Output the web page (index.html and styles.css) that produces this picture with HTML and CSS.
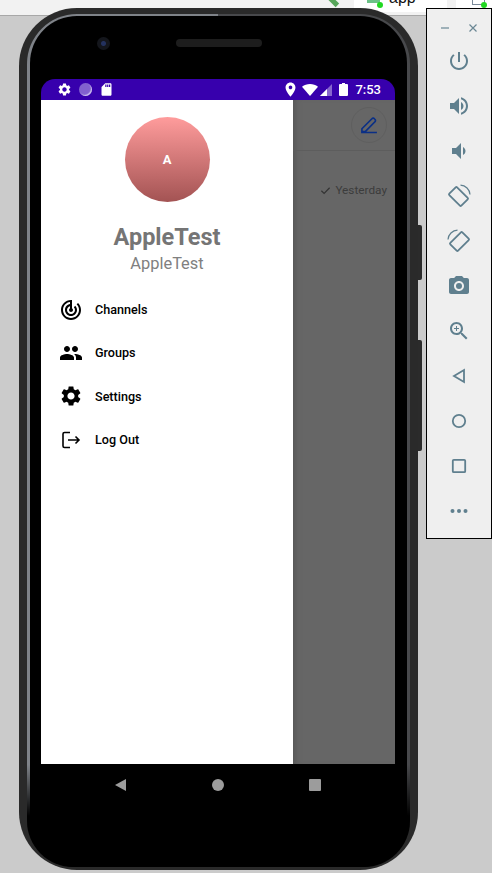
FILE: index.html
```html
<!DOCTYPE html>
<html lang="en">
<head>
    <meta charset="UTF-8">
    <title>Emulator</title>
    <link rel="stylesheet" href="styles.css">
</head>
<body>
    <div class="toolbar">
        <div class="hammer"></div>
        <div class="runTab">
            <span class="moduleIcon"><span class="greenDot"></span></span>
            <span class="runName">app</span>
        </div>
        <div class="deviceTab">
            <span class="deviceIcon"><span class="greenDot"></span></span>
        </div>
    </div>

    <div class="sideBtn powerBtn"></div>
    <div class="sideBtn volumeBtn"></div>

    <div class="phone">
        <div class="rim">
            <div class="face">
                <div class="earpiece">
                    <span class="camera"></span>
                    <span class="speaker"></span>
                </div>
                <div class="screen">
                    <div class="statusBar">
                        <div class="statusGroup">
                            <svg class="statusIcon" viewBox="0 0 24 24"><path d="M19.14 12.94c.04-.3.06-.61.06-.94 0-.32-.02-.64-.07-.94l2.03-1.58c.18-.14.23-.41.12-.61l-1.92-3.32c-.12-.22-.37-.29-.59-.22l-2.39.96c-.5-.38-1.03-.7-1.62-.94l-.36-2.54c-.04-.24-.24-.41-.48-.41h-3.84c-.24 0-.43.17-.47.41l-.36 2.54c-.59.24-1.13.57-1.62.94l-2.39-.96c-.22-.08-.47 0-.59.22L2.74 8.87c-.12.21-.08.47.12.61l2.03 1.58c-.05.3-.09.63-.09.94s.02.64.07.94l-2.03 1.58c-.18.14-.23.41-.12.61l1.92 3.32c.12.22.37.29.59.22l2.39-.96c.5.38 1.03.7 1.62.94l.36 2.54c.05.24.24.41.48.41h3.84c.24 0 .44-.17.47-.41l.36-2.54c.59-.24 1.13-.56 1.62-.94l2.39.96c.22.08.47 0 .59-.22l1.92-3.32c.12-.22.07-.47-.12-.61l-2.01-1.58zM12 15.6c-1.98 0-3.6-1.62-3.6-3.6s1.62-3.6 3.6-3.6 3.6 1.62 3.6 3.6-1.62 3.6-3.6 3.6z"/></svg>
                            <span class="syncDot"></span>
                            <svg class="statusIcon" viewBox="0 0 24 24"><path d="M18 2h-8L4.02 8 4 20c0 1.1.9 2 2 2h12c1.1 0 2-.9 2-2V4c0-1.1-.9-2-2-2zm-6 6h-2V4h2v4zm3 0h-2V4h2v4zm3 0h-2V4h2v4z"/></svg>
                        </div>
                        <div class="statusGroup">
                            <svg class="locationIcon" viewBox="0 0 24 24"><path d="M12 2C8.13 2 5 5.13 5 9c0 5.25 7 13 7 13s7-7.75 7-13c0-3.87-3.13-7-7-7zm0 9.5c-1.38 0-2.5-1.12-2.5-2.5s1.12-2.5 2.5-2.5 2.5 1.12 2.5 2.5-1.12 2.5-2.5 2.5z"/></svg>
                            <svg class="wifiIcon" viewBox="0 0 24 18"><path d="M12 18 24 4C20.6 1.4 16.5 0 12 0S3.4 1.4 0 4z"/></svg>
                            <svg class="signalIcon" viewBox="0 0 12 12"><path d="M12 0V12H0z" fill-opacity=".4"/><path d="M7 5V12H0z"/></svg>
                            <svg class="batteryIcon" viewBox="0 0 9 13"><path d="M3 0H6V1H8A1 1 0 0 1 9 2V12A1 1 0 0 1 8 13H1A1 1 0 0 1 0 12V2A1 1 0 0 1 1 1H3z"/></svg>
                            <span class="clock">7:53</span>
                        </div>
                    </div>
                    <div class="appArea">
                        <div class="drawer">
                            <div class="avatar">A</div>
                            <div class="userName">AppleTest</div>
                            <div class="userSub">AppleTest</div>
                            <div class="menu">
                                <div class="menuItem">
                                    <svg class="menuIcon" viewBox="0 0 24 24"><path d="M19.07 4.93l-1.41 1.41C19.1 7.79 20 9.79 20 12c0 4.42-3.58 8-8 8s-8-3.58-8-8c0-4.08 3.05-7.44 7-7.93v2.02C8.16 6.57 6 9.03 6 12c0 3.31 2.69 6 6 6s6-2.69 6-6c0-1.66-.67-3.16-1.76-4.24l-1.41 1.41C15.55 9.9 16 10.9 16 12c0 2.21-1.79 4-4 4s-4-1.79-4-4c0-1.86 1.28-3.41 3-3.86v2.14c-.6.35-1 .98-1 1.72 0 1.1.9 2 2 2s2-.9 2-2c0-.74-.4-1.38-1-1.72V2h-1C6.48 2 2 6.48 2 12s4.48 10 10 10 10-4.48 10-10c0-2.76-1.12-5.26-2.93-7.07z"/></svg>
                                    <span>Channels</span>
                                </div>
                                <div class="menuItem">
                                    <svg class="menuIcon" viewBox="0 0 24 24"><path d="M16 11c1.66 0 2.99-1.34 2.99-3S17.66 5 16 5c-1.66 0-3 1.34-3 3s1.34 3 3 3zm-8 0c1.66 0 2.99-1.34 2.99-3S9.66 5 8 5C6.34 5 5 6.34 5 8s1.34 3 3 3zm0 2c-2.33 0-7 1.17-7 3.5V19h14v-2.5c0-2.33-4.67-3.5-7-3.5zm8 0c-.29 0-.62.02-.97.05 1.16.84 1.97 1.97 1.97 3.45V19h6v-2.5c0-2.33-4.67-3.5-7-3.5z"/></svg>
                                    <span>Groups</span>
                                </div>
                                <div class="menuItem">
                                    <svg class="menuIcon" viewBox="0 0 24 24"><path d="M19.14 12.94c.04-.3.06-.61.06-.94 0-.32-.02-.64-.07-.94l2.03-1.58c.18-.14.23-.41.12-.61l-1.92-3.32c-.12-.22-.37-.29-.59-.22l-2.39.96c-.5-.38-1.03-.7-1.62-.94l-.36-2.54c-.04-.24-.24-.41-.48-.41h-3.84c-.24 0-.43.17-.47.41l-.36 2.54c-.59.24-1.13.57-1.62.94l-2.39-.96c-.22-.08-.47 0-.59.22L2.74 8.87c-.12.21-.08.47.12.61l2.03 1.58c-.05.3-.09.63-.09.94s.02.64.07.94l-2.03 1.58c-.18.14-.23.41-.12.61l1.92 3.32c.12.22.37.29.59.22l2.39-.96c.5.38 1.03.7 1.62.94l.36 2.54c.05.24.24.41.48.41h3.84c.24 0 .44-.17.47-.41l.36-2.54c.59-.24 1.13-.56 1.62-.94l2.39.96c.22.08.47 0 .59-.22l1.92-3.32c.12-.22.07-.47-.12-.61l-2.01-1.58zM12 15.6c-1.98 0-3.6-1.62-3.6-3.6s1.62-3.6 3.6-3.6 3.6 1.62 3.6 3.6-1.62 3.6-3.6 3.6z"/></svg>
                                    <span>Settings</span>
                                </div>
                                <div class="menuItem">
                                    <svg class="menuIcon" viewBox="0 0 24 24" fill="none" stroke="#000" stroke-width="1.6"><path d="M11 4.500H5.500A1.500 1.500 0 0 0 4 6V18A1.500 1.500 0 0 0 5.500 19.500H11"/><path d="M9 12H20M16.500 8.500 20 12 16.500 15.500"/></svg>
                                    <span>Log Out</span>
                                </div>
                            </div>
                        </div>
                        <div class="behind">
                            <div class="appBar">
                                <span class="composeBtn">
                                    <svg class="composeIcon" viewBox="0 0 24 24" fill="none" stroke="#0a2f86" stroke-width="2"><path d="M3.500 16.500 15.500 4.500a2 2 0 0 1 3 0l.6.6a2 2 0 0 1 0 3L7.500 20H3.500zM2.500 21h19"/></svg>
                                </span>
                            </div>
                            <div class="chatTime">
                                <svg class="checkIcon" viewBox="0 0 24 24" fill="none" stroke="#333" stroke-width="2.600"><path d="M3 12.500 9 18.500 21 6"/></svg>
                                <span>Yesterday</span>
                            </div>
                        </div>
                    </div>
                </div>
                <div class="navBar">
                    <span class="navBack"></span>
                    <span class="navHome"></span>
                    <span class="navRecent"></span>
                </div>
            </div>
        </div>
    </div>

    <div class="controls">
        <div class="controlsHead">
            <svg class="headIcon" viewBox="0 0 10 10"><path d="M1 5H9"/></svg>
            <svg class="headIcon" viewBox="0 0 10 10"><path d="M1.500 1.500 8.500 8.500M8.500 1.500 1.500 8.500"/></svg>
        </div>
        <div class="controlBtn"><svg viewBox="0 0 24 24"><path d="M13 3h-2v10h2V3zm4.830 2.170l-1.420 1.420C17.990 7.860 19 9.810 19 12c0 3.870-3.130 7-7 7s-7-3.130-7-7c0-2.190 1.010-4.140 2.580-5.420L6.170 5.170C4.230 6.820 3 9.260 3 12c0 4.970 4.030 9 9 9s9-4.030 9-9c0-2.740-1.230-5.180-3.170-6.830z"/></svg></div>
        <div class="controlBtn"><svg viewBox="0 0 24 24"><path d="M3 9v6h4l5 5V4L7 9H3zm13.500 3c0-1.770-1.020-3.290-2.500-4.030v8.050c1.480-.73 2.500-2.250 2.500-4.020zM14 3.230v2.060c2.890.86 5 3.540 5 6.710s-2.110 5.850-5 6.710v2.060c4.010-.91 7-4.490 7-8.770s-2.990-7.860-7-8.770z"/></svg></div>
        <div class="controlBtn"><svg viewBox="0 0 24 24"><path d="M18.500 12c0-1.770-1.020-3.290-2.500-4.030v8.050c1.480-.73 2.500-2.250 2.500-4.020zM5 9v6h4l5 5V4L9 9H5z"/></svg></div>
        <div class="controlBtn"><svg class="lined" viewBox="0 0 24 24"><rect x="6" y="4" width="11" height="17" rx="1" transform="rotate(-45 11.500 12.500)"/><path class="thin" d="M13.500 1.200C18.500 1.200 22.800 5.500 23 10.500"/></svg></div>
        <div class="controlBtn"><svg class="lined" viewBox="0 0 24 24"><rect x="7" y="4" width="11" height="17" rx="1" transform="rotate(45 12.500 12.500)"/><path class="thin" d="M10.500 1.200C5.500 1.200 1.200 5.500 1 10.500"/></svg></div>
        <div class="controlBtn"><svg viewBox="0 0 24 24"><path fill-rule="evenodd" d="M9 2 7.170 4H4C2.900 4 2 4.900 2 6v12c0 1.100.9 2 2 2h16c1.100 0 2-.9 2-2V6c0-1.100-.9-2-2-2h-3.170L15 2H9zm3 15c-2.760 0-5-2.240-5-5s2.240-5 5-5 5 2.240 5 5-2.240 5-5 5z"/><circle cx="12" cy="12" r="3"/></svg></div>
        <div class="controlBtn"><svg viewBox="0 0 24 24"><path d="M15.500 14h-.79l-.28-.27C15.410 12.590 16 11.110 16 9.500 16 5.910 13.090 3 9.500 3S3 5.910 3 9.500 5.910 16 9.500 16c1.610 0 3.090-.59 4.230-1.570l.27.28v.79l5 4.990L20.490 19l-4.990-5zm-6 0C7.010 14 5 11.990 5 9.500S7.010 5 9.500 5 14 7.010 14 9.500 11.990 14 9.500 14z"/><path d="M12 10h-2v2H9v-2H7V9h2V7h1v2h2v1z"/></svg></div>
        <div class="controlBtn"><svg class="lined" viewBox="0 0 24 24"><path d="M17 6V18L7 12z"/></svg></div>
        <div class="controlBtn"><svg class="lined" viewBox="0 0 24 24"><circle cx="12" cy="12" r="6.200"/></svg></div>
        <div class="controlBtn"><svg class="lined" viewBox="0 0 24 24"><rect x="5.800" y="5.800" width="12.400" height="12.400" rx="1"/></svg></div>
        <div class="controlBtn"><svg viewBox="0 0 24 24"><circle cx="5.500" cy="12" r="2"/><circle cx="12" cy="12" r="2"/><circle cx="18.500" cy="12" r="2"/></svg></div>
    </div>
</body>
</html>
```

FILE: styles.css
```css
*
{
    box-sizing: border-box;
}
html, body
{
    height: 100%;
}
body
{
    margin: 0;
    overflow: hidden;
    background: #cbcbcb;
    font-family: Roboto, "Liberation Sans", sans-serif;
}

/* IDE toolbar cut off behind the emulator */
.toolbar
{
    display: flex;
    align-items: flex-start;
    height: 16px;
    padding-left: 354px;
    background: #f2f2f2;
    border-bottom: 1px solid #a8a8a8;
    overflow: hidden;
    position: relative;
}
.hammer
{
    position: absolute;
    left: 331px;
    top: -4px;
    width: 5px;
    height: 11px;
    background: #57a55a;
    transform: rotate(-45deg);
}
.runTab
{
    display: flex;
    width: 93px;
    height: 12px;
    padding-left: 13px;
    background: #fff;
    overflow: hidden;
}
.moduleIcon
{
    display: block;
    width: 13px;
    height: 3px;
    background: #6cc287;
    position: relative;
}
.greenDot
{
    position: absolute;
    right: -3px;
    top: 2px;
    width: 6px;
    height: 6px;
    border-radius: 50%;
    background: #22d822;
}
.runName
{
    margin-left: 9px;
    margin-top: -11px;
    font: 16px/18px "Liberation Sans", sans-serif;
    color: #111;
}
.deviceTab
{
    width: 36px;
    height: 12px;
    margin-left: 9px;
    padding-left: 16px;
    background: #fff;
}
.deviceIcon
{
    display: block;
    width: 13px;
    height: 5px;
    border: 1px solid #7a8a9a;
    border-top: 0;
    position: relative;
}

/* hardware keys */
.sideBtn
{
    position: absolute;
    left: 417px;
    width: 5px;
    background: #2b2b2b;
    border-radius: 0 2px 2px 0;
}
.powerBtn
{
    top: 225px;
    height: 55px;
}
.volumeBtn
{
    top: 340px;
    height: 111px;
}

/* phone body */
.phone
{
    position: absolute;
    left: 19px;
    top: 8px;
    width: 399px;
    height: 862px;
    padding: 6px 8px 3px;
    background: #2a2a2a;
    border-radius: 58px;
}
.rim
{
    height: 100%;
    padding: 2px 3px 0;
    background:
        linear-gradient(to bottom, transparent 88%, #000 94%),
        linear-gradient(to right, #7f8389 50%, #48494c 50%);
    border-radius: 50px 50px 46px 46px;
}
.face
{
    display: flex;
    flex-direction: column;
    height: 100%;
    padding: 0 12px 0 11px;
    background: #000;
    border-radius: 47px;
}
.earpiece
{
    display: flex;
    align-items: center;
    flex: none;
    height: 63px;
    padding: 0 0 9px 56px;
}
.camera
{
    width: 13px;
    height: 13px;
    background: radial-gradient(circle, #23315e 0 2px, #14161c 3px);
    border-radius: 50%;
}
.speaker
{
    width: 86px;
    height: 8px;
    margin-left: 66px;
    background: #1d1d1d;
    border-radius: 4px;
}
.screen
{
    display: flex;
    flex-direction: column;
    flex: none;
    height: 685px;
}

/* status bar */
.statusBar
{
    display: flex;
    align-items: center;
    justify-content: space-between;
    flex: none;
    height: 21px;
    padding: 0 14px 0 16px;
    background: #3700ad;
    border-radius: 14px 14px 0 0;
}
.statusGroup
{
    display: flex;
    align-items: center;
    gap: 7px;
}
.statusIcon
{
    display: block;
    width: 15px;
    height: 15px;
    fill: #fff;
}
.syncDot
{
    width: 13px;
    height: 13px;
    background: #8261ce;
    border-radius: 50%;
    box-shadow: inset -1px -1px 1px #cfc2ee;
}
.locationIcon
{
    display: block;
    width: 17px;
    height: 17px;
    margin-right: -4px;
    fill: #fff;
}
.wifiIcon
{
    display: block;
    width: 16px;
    height: 12px;
    margin-right: -5px;
    fill: #fff;
}
.signalIcon
{
    display: block;
    width: 12px;
    height: 12px;
    fill: #fff;
}
.batteryIcon
{
    display: block;
    width: 9px;
    height: 13px;
    fill: #fff;
}
.clock
{
    font-size: 13px;
    font-weight: 500;
    color: #fff;
}

/* app content */
.appArea
{
    display: flex;
    flex: 1;
    min-height: 0;
}
.drawer
{
    display: flex;
    flex-direction: column;
    align-items: center;
    flex: none;
    width: 252px;
    padding-top: 17px;
    background: #fff;
}
.avatar
{
    display: flex;
    align-items: center;
    justify-content: center;
    width: 85px;
    height: 85px;
    background: linear-gradient(#ff9c9c, #a35353);
    border-radius: 50%;
    font-size: 13px;
    font-weight: 700;
    color: #fff;
}
.userName
{
    margin-top: 20px;
    font-size: 23.500px;
    line-height: 30px;
    font-weight: 700;
    color: #757575;
}
.userSub
{
    margin-top: 1px;
    font-size: 16.400px;
    line-height: 22px;
    color: #808080;
}
.menu
{
    align-self: stretch;
    margin-top: 13px;
    padding-left: 18px;
}
.menuItem
{
    display: flex;
    align-items: center;
    gap: 12px;
    height: 43.300px;
    font-size: 12.600px;
    font-weight: 500;
    color: #000;
}
.menuIcon
{
    display: block;
    width: 24px;
    height: 24px;
}
.behind
{
    flex: 1;
    background: #666;
    box-shadow: inset 7px 0 6px -5px #555;
}
.appBar
{
    display: flex;
    align-items: center;
    justify-content: flex-end;
    height: 51px;
    padding-right: 8px;
    border-bottom: 1px solid #5d5d5d;
}
.composeBtn
{
    display: flex;
    align-items: center;
    justify-content: center;
    width: 36px;
    height: 36px;
    border: 1px solid #5f5f5f;
    border-radius: 50%;
}
.composeIcon
{
    display: block;
    width: 20px;
    height: 20px;
}
.chatTime
{
    display: flex;
    align-items: center;
    justify-content: flex-end;
    gap: 4px;
    margin-top: 32px;
    padding-right: 8px;
    font-size: 11.800px;
    color: #3c3c3c;
}
.checkIcon
{
    display: block;
    width: 11px;
    height: 11px;
}

/* nav buttons */
.navBar
{
    display: flex;
    align-items: center;
    flex: none;
    height: 42px;
    padding-left: 74px;
}
.navBack
{
    width: 0;
    height: 0;
    border-top: 6px solid transparent;
    border-bottom: 6px solid transparent;
    border-right: 11px solid #9c9c9c;
}
.navHome
{
    width: 12px;
    height: 12px;
    margin-left: 86px;
    background: #9c9c9c;
    border-radius: 50%;
}
.navRecent
{
    width: 12px;
    height: 12px;
    margin-left: 85px;
    background: #9c9c9c;
    border-radius: 1px;
}

/* emulator side panel */
.controls
{
    position: absolute;
    left: 426px;
    top: 8px;
    width: 66px;
    height: 531px;
    padding-top: 8px;
    background: #efefef;
    border: 1px solid #000;
}
.controlsHead
{
    display: flex;
    align-items: center;
    justify-content: space-between;
    height: 21px;
    padding: 0 13px;
}
.headIcon
{
    display: block;
    width: 10px;
    height: 10px;
    fill: none;
    stroke: #6a8794;
    stroke-width: 1.200;
}
.controlBtn
{
    display: flex;
    align-items: center;
    justify-content: center;
    height: 45.100px;
}
.controlBtn svg
{
    display: block;
    width: 24px;
    height: 24px;
    fill: #5f7f8e;
}
.controlBtn svg.lined
{
    fill: none;
    stroke: #5f7f8e;
    stroke-width: 1.800;
}
.controlBtn svg .thin
{
    stroke-width: 1.200;
}
```
